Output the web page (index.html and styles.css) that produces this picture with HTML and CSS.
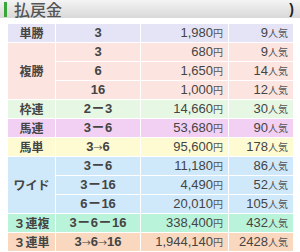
FILE: index.html
```html
<!DOCTYPE html>
<html lang="ja">
<head>
<meta charset="utf-8">
<link rel="stylesheet" href="styles.css">
</head>
<body>
<div class="head">
  <span class="bar"></span>
  <h2 class="title">払戻金</h2>
  <span class="cut">)</span>
</div>
<table class="pay">
  <colgroup>
    <col class="c-type"><col class="c-num"><col class="c-amt"><col class="c-pop">
  </colgroup>
  <tr class="tansho"><th>単勝</th><td class="num">3</td><td class="amt">1,980<small>円</small></td><td class="pop">9<small>人気</small></td></tr>
  <tr class="fukusho"><th rowspan="3">複勝</th><td class="num">3</td><td class="amt">680<small>円</small></td><td class="pop">9<small>人気</small></td></tr>
  <tr class="fukusho"><td class="num">6</td><td class="amt">1,650<small>円</small></td><td class="pop">14<small>人気</small></td></tr>
  <tr class="fukusho"><td class="num">16</td><td class="amt">1,000<small>円</small></td><td class="pop">12<small>人気</small></td></tr>
  <tr class="wakuren"><th>枠連</th><td class="num">2<span class="d">ー</span>3</td><td class="amt">14,660<small>円</small></td><td class="pop">30<small>人気</small></td></tr>
  <tr class="umaren"><th>馬連</th><td class="num">3<span class="d">ー</span>6</td><td class="amt">53,680<small>円</small></td><td class="pop">90<small>人気</small></td></tr>
  <tr class="umatan"><th>馬単</th><td class="num">3<span class="ar">→</span>6</td><td class="amt">95,600<small>円</small></td><td class="pop">178<small>人気</small></td></tr>
  <tr class="wide"><th rowspan="3">ワイド</th><td class="num">3<span class="d">ー</span>6</td><td class="amt">11,180<small>円</small></td><td class="pop">86<small>人気</small></td></tr>
  <tr class="wide"><td class="num">3<span class="d">ー</span>16</td><td class="amt">4,490<small>円</small></td><td class="pop">52<small>人気</small></td></tr>
  <tr class="wide"><td class="num">6<span class="d">ー</span>16</td><td class="amt">20,010<small>円</small></td><td class="pop">105<small>人気</small></td></tr>
  <tr class="trio"><th>３連複</th><td class="num">3<span class="d">ー</span>6<span class="d">ー</span>16</td><td class="amt">338,400<small>円</small></td><td class="pop">432<small>人気</small></td></tr>
  <tr class="trifecta"><th>３連単</th><td class="num">3<span class="ar">→</span>6<span class="ar">→</span>16</td><td class="amt">1,944,140<small>円</small></td><td class="pop">2428<small>人気</small></td></tr>
</table>
</body>
</html>
```
FILE: styles.css
```css
html, body {
  margin: 0;
  padding: 0;
  background: #ffffff;
}
body {
  width: 300px;
  height: 252px;
  overflow: hidden;
  font-family: "Liberation Sans", "Noto Sans CJK JP", sans-serif;
  color: #333333;
}
.head {
  display: flex;
  align-items: center;
  height: 18px;
  background: linear-gradient(#f4f4f4, #d8d8d8);
}
.bar {
  width: 3px;
  height: 15px;
  margin-left: 4px;
  background: #3aa63a;
}
.title {
  margin: 0 0 0 7px;
  font-family: "Noto Sans CJK JP", sans-serif;
  font-weight: 500;
  font-size: 16px;
  line-height: 18px;
  color: #555555;
}
.cut {
  margin-left: auto;
  margin-right: 6px;
  font-size: 14px;
  font-weight: 700;
  color: #222;
  line-height: 18px;
}
.pay {
  margin: 5px 0 0 7px;
  width: 286px;
  border-collapse: collapse;
  table-layout: fixed;
}
.c-type { width: 48px; }
.c-num { width: 85px; }
.c-amt { width: 88px; }
.c-pop { width: 65px; }
.pay th, .pay td {
  height: 18px;
  padding: 0;
  border: 1px solid #ffffff;
  line-height: 14px;
  white-space: nowrap;
  vertical-align: middle;
  overflow: hidden;
}
.pay th {
  font-family: "Noto Sans CJK JP", sans-serif;
  font-size: 12px;
  font-weight: 700;
  color: #444;
  text-align: center;
}
.num {
  text-align: center;
  font-size: 13px;
  font-weight: 700;
  color: #444;
}
.num span, small {
  line-height: 10px;
}
.num .d {
  font-family: "Noto Sans CJK JP", sans-serif;
  font-size: 12px;
  margin: 0 1px;
}
.num .ar {
  font-family: "Noto Sans CJK JP", sans-serif;
  font-size: 9px;
  font-weight: 400;
}
.amt {
  text-align: right;
  padding-right: 5px !important;
  font-size: 13px;
  color: #444;
}
.pop {
  text-align: right;
  padding-right: 5px !important;
  font-size: 13px;
  color: #444;
}
small {
  font-family: "Noto Sans CJK JP", sans-serif;
  font-size: 10px;
  color: #555;
}
.tansho th, .tansho td { background: #e4e4f6; }
.fukusho th, .fukusho td { background: #fce4e0; }
.wakuren th, .wakuren td { background: #e6f8e4; }
.umaren th, .umaren td { background: #f2d0f4; }
.umatan th, .umatan td { background: #fefbd2; }
.wide th, .wide td { background: #cfe9fb; }
.trio th, .trio td { background: #b9f3d9; }
.trifecta th, .trifecta td { background: #f9d8bf; }
```
